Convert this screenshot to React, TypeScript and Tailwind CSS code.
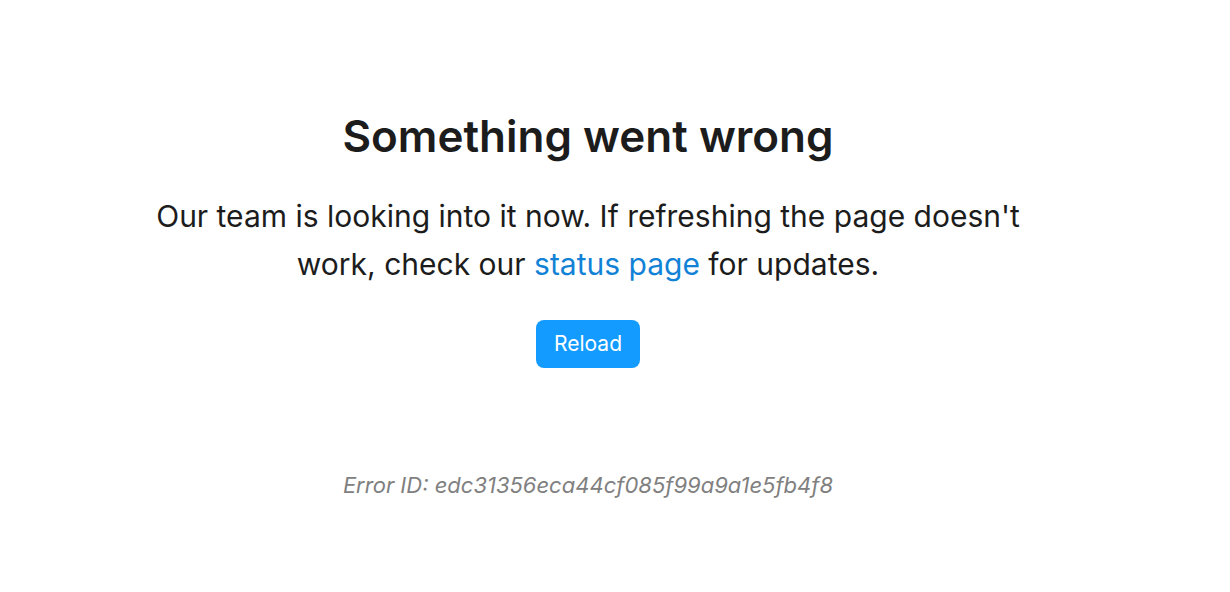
export default function App() {
  return (
    <div className="min-h-screen bg-white font-['Inter',sans-serif] text-[#1c1c1c]">
      <main className="flex flex-col items-center pr-[54px] pt-[106px] text-center">
        <h1 className="text-[44px] font-semibold leading-[60px]">Something went wrong</h1>
        <p className="mt-[26px] max-w-[880px] text-[30px] leading-[48px]">
          Our team is looking into it now. If refreshing the page doesn't work, check our{" "}
          <a href="#" className="text-[#1282d6]">status page</a> for updates.
        </p>
        <button className="mt-[32px] h-[48px] w-[104px] rounded-[8px] bg-[#149bff] text-[21px] text-white">
          Reload
        </button>
        <p className="mt-[101px] text-[22px] italic text-[#808080]">Error ID: edc31356eca44cf085f99a9a1e5fb4f8</p>
      </main>
    </div>
  );
}
